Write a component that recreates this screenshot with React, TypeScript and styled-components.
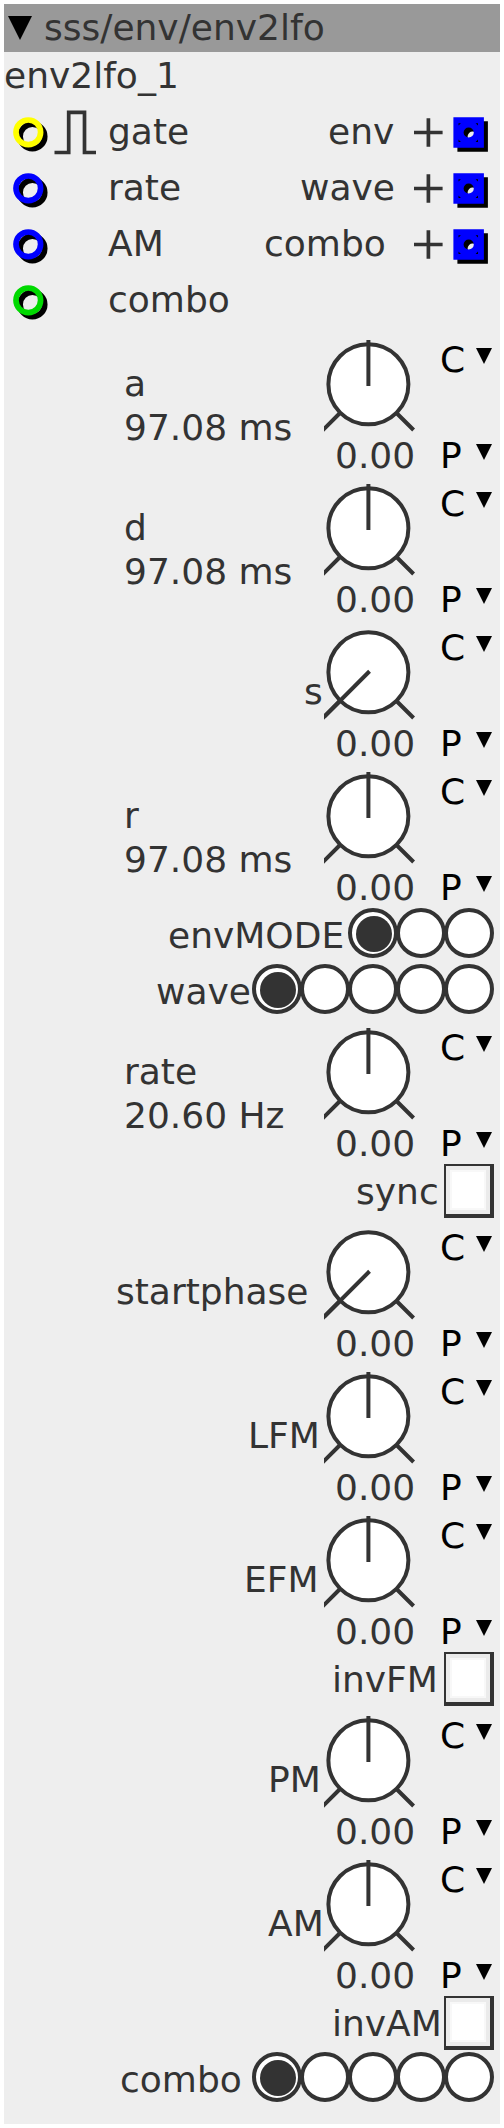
import React, { useId, useState } from "react";
import styled, { createGlobalStyle } from "styled-components";

const INK = "#333333";
const PANEL = "#eeeeee";

const GlobalStyle = createGlobalStyle`
  *, *::before, *::after { box-sizing: border-box; }
  body {
    margin: 0;
    background: #ffffff;
    color: ${INK};
    font: 36px/48px "DejaVu Sans", sans-serif;
  }
  button, input { font: inherit; color: inherit; margin: 0; }
`;

const Patch = styled.main`
  padding: 4px;
`;

const Panel = styled.section`
  background: ${PANEL};
  padding-bottom: 20px;
`;

const TitleBar = styled.header`
  display: flex;
  align-items: center;
  height: 48px;
  padding-left: 4px;
  background: #999999;
`;

const CollapseButton = styled.button`
  display: flex;
  width: 36px;
  padding: 0;
  border: 0;
  background: none;
  color: #000000;
`;

const Title = styled.h1`
  margin: 0;
  font: inherit;
`;

const InstanceName = styled.div`
  padding-bottom: 4px;
`;

const PortRow = styled.div`
  display: flex;
  height: 56px;
  line-height: 56px;
`;

const SignalSlot = styled.span`
  width: 56px;
`;

const Drawing = styled.svg`
  display: block;
  flex: none;
`;

/* Labels are sized in steps of the 4px grid. */
const Label = styled.span<{ $cells: number }>`
  flex: none;
  width: ${(p) => p.$cells * 4}px;
  white-space: nowrap;
`;

const OutletGroup = styled.div`
  display: flex;
  margin-left: auto;
`;

const KnobRow = styled.div`
  display: flex;
  height: 144px;
`;

const KnobCaption = styled.div`
  display: flex;
  flex: 1;
  align-items: center;
  justify-content: flex-end;
  padding-top: 8px;
  line-height: 44px;
`;

const Reading = styled.div`
  width: 200px;
  padding-top: 4px;
  white-space: nowrap;
`;

const KnobColumn = styled.div`
  flex: none;
  width: 116px;
  padding-top: 12px;
`;

const Dial = styled.div`
  position: relative;
  height: 100px;
`;

const DialInput = styled.input`
  position: absolute;
  inset: 0;
  width: 92px;
  height: 92px;
  opacity: 0;
  cursor: pointer;
`;

const DialValue = styled.output`
  display: block;
  padding-left: 11px;
  line-height: 32px;
`;

const MenuColumn = styled.div`
  display: flex;
  flex: none;
  flex-direction: column;
  justify-content: space-between;
  width: 60px;
  padding-top: 16px;
`;

const MenuButton = styled.button`
  display: flex;
  align-items: flex-start;
  justify-content: space-between;
  width: 52px;
  height: 32px;
  padding: 0;
  border: 0;
  background: none;
  color: #000000;
  line-height: 32px;
`;

const ControlRow = styled.div`
  display: flex;
  align-items: flex-start;
  justify-content: flex-end;
  height: 56px;
  padding: 4px 6px 0 0;
`;

const ControlLabel = styled.label<{ $cells: number }>`
  flex: none;
  width: ${(p) => p.$cells * 4}px;
  padding-top: 4px;
  white-space: nowrap;
`;

const RadioStrip = styled.div`
  display: flex;
  padding-right: 2px;
`;

const Radio = styled.input`
  appearance: none;
  flex: none;
  width: 50px;
  height: 50px;
  margin-right: -2px;
  border: 4px solid ${INK};
  border-radius: 50%;
  background: #ffffff;

  &:checked::before {
    content: "";
    display: block;
    width: 36px;
    height: 36px;
    margin: 4px 0 0 4px;
    border-radius: 50%;
    background: ${INK};
  }
`;

const CheckBox = styled.input`
  appearance: none;
  flex: none;
  width: 50px;
  height: 54px;
  border: solid ${INK};
  border-width: 2px 4px 4px 2px;
  background: #ffffff;
  box-shadow: inset 0 0 0 4px #ebebeb, inset 0 0 0 6px #f8f8f8;

  &:checked {
    background: ${INK};
  }
`;

function Inlet({ color }: { color: string }) {
  return (
    <Drawing width="48" height="56" viewBox="0 0 48 56" fill="none" strokeWidth="5.7" aria-hidden="true">
      <circle cx="28.4" cy="32.4" r="12.3" stroke="#000000" />
      <circle cx="24.3" cy="28.3" r="12.3" stroke={color} />
    </Drawing>
  );
}

function GateIcon() {
  return (
    <Drawing width="48" height="56" viewBox="0 0 48 56" fill="none" stroke={INK} strokeWidth="3.7" aria-hidden="true">
      <path d="M2.5 48.5H16.7V8.3H32.5V48.5H44" />
    </Drawing>
  );
}

const OUTLET_SHAPE = "M0 0H30.5V30.5H0ZM15.3 10.2A5.1 5.1 0 1 0 15.3 20.4A5.1 5.1 0 1 0 15.3 10.2Z";

function Outlet() {
  return (
    <Drawing width="104" height="56" viewBox="0 0 104 56" aria-hidden="true">
      <path d="M18 28.5H46.6M32.4 14.3V42.7" stroke={INK} strokeWidth="3.7" />
      <g fillRule="evenodd">
        <path d={OUTLET_SHAPE} transform="translate(61.4 17.2)" />
        <path d={OUTLET_SHAPE} transform="translate(57.4 13.2)" fill="#0000ff" />
      </g>
      <path d="M62.5 19.2h2.4l-2.4 2.4zM82 19.2h-2.4l2.4 2.4zM62.5 38h2.4l-2.4 -2.4zM82 38h-2.4l2.4 -2.4z" />
    </Drawing>
  );
}

function MenuArrow() {
  return (
    <Drawing width="16" height="20" viewBox="0 0 16 20" aria-hidden="true">
      <path d="M0 4H16L8 20Z" />
    </Drawing>
  );
}

interface KnobProps {
  name: string;
  cells?: number;
  reading?: string;
  low?: boolean;
}

function Knob({ name, cells = 0, reading, low = false }: KnobProps) {
  const [value, setValue] = useState(0);
  const id = useId();
  const min = low ? 0 : -64;
  const angle = ((value - min) / (64 - min)) * 270 - 135;
  return (
    <KnobRow>
      <KnobCaption>
        {reading ? (
          <Reading>
            <label htmlFor={id}>{name}</label>
            <div>{reading}</div>
          </Reading>
        ) : (
          <Label as="label" htmlFor={id} $cells={cells}>
            {name}
          </Label>
        )}
      </KnobCaption>
      <KnobColumn>
        <Dial>
          <Drawing width="96" height="92" viewBox="0 0 96 92" fill="none" stroke={INK} strokeWidth="4" aria-hidden="true">
            <path d="M16 73L-2 91M72.5 73L89.6 90" />
            <circle cx="44.4" cy="44.3" r="40" fill="#ffffff" />
            <path d={low ? "M44.4 46V-18" : "M44.4 46V0"} transform={`rotate(${angle} 44.4 44.4)`} />
          </Drawing>
          <DialInput
            id={id}
            type="range"
            min={min}
            max={64}
            step={0.5}
            value={value}
            onChange={(e) => setValue(Number(e.target.value))}
          />
        </Dial>
        <DialValue htmlFor={id}>{value.toFixed(2)}</DialValue>
      </KnobColumn>
      <MenuColumn>
        <MenuButton type="button" aria-haspopup="menu">
          C<MenuArrow />
        </MenuButton>
        <MenuButton type="button" aria-haspopup="menu">
          P<MenuArrow />
        </MenuButton>
      </MenuColumn>
    </KnobRow>
  );
}

function Selector({ name, cells, count }: { name: string; cells: number; count: number }) {
  const [selected, setSelected] = useState(0);
  const id = useId();
  return (
    <ControlRow>
      <ControlLabel htmlFor={`${id}-0`} id={id} $cells={cells}>
        {name}
      </ControlLabel>
      <RadioStrip role="radiogroup" aria-labelledby={id}>
        {Array.from({ length: count }, (_, i) => (
          <Radio
            key={i}
            id={`${id}-${i}`}
            type="radio"
            name={id}
            aria-label={`${name} ${i + 1}`}
            checked={selected === i}
            onChange={() => setSelected(i)}
          />
        ))}
      </RadioStrip>
    </ControlRow>
  );
}

function Toggle({ name, cells }: { name: string; cells: number }) {
  const id = useId();
  return (
    <ControlRow>
      <ControlLabel htmlFor={id} $cells={cells}>
        {name}
      </ControlLabel>
      <CheckBox id={id} type="checkbox" />
    </ControlRow>
  );
}

const PORTS = [
  { inlet: "gate", color: "#ffff00", gate: true, outlet: "env", cells: 17 },
  { inlet: "rate", color: "#0000ff", outlet: "wave", cells: 24 },
  { inlet: "AM", color: "#0000ff", outlet: "combo", cells: 33 },
  { inlet: "combo", color: "#00d900" },
];

export default function App() {
  return (
    <>
      <GlobalStyle />
      <Patch>
        <Panel>
          <TitleBar>
            <CollapseButton type="button" aria-label="Collapse">
              <Drawing width="24" height="24" viewBox="0 0 24 24" aria-hidden="true">
                <path d="M0 0H24L12 24Z" />
              </Drawing>
            </CollapseButton>
            <Title>sss/env/env2lfo</Title>
          </TitleBar>
          <InstanceName>env2lfo_1</InstanceName>
          {PORTS.map((port) => (
            <PortRow key={port.inlet}>
              <Inlet color={port.color} />
              <SignalSlot>{port.gate && <GateIcon />}</SignalSlot>
              <span>{port.inlet}</span>
              {port.outlet && (
                <OutletGroup>
                  <Label $cells={port.cells}>{port.outlet}</Label>
                  <Outlet />
                </OutletGroup>
              )}
            </PortRow>
          ))}
          <Knob name="a" reading="97.08 ms" />
          <Knob name="d" reading="97.08 ms" />
          <Knob name="s" cells={5} low />
          <Knob name="r" reading="97.08 ms" />
          <Selector name="envMODE" cells={45} count={3} />
          <Selector name="wave" cells={24} count={5} />
          <Knob name="rate" reading="20.60 Hz" />
          <Toggle name="sync" cells={22} />
          <Knob name="startphase" cells={52} low />
          <Knob name="LFM" cells={19} />
          <Knob name="EFM" cells={20} />
          <Toggle name="invFM" cells={28} />
          <Knob name="PM" cells={14} />
          <Knob name="AM" cells={14} />
          <Toggle name="invAM" cells={28} />
          <Selector name="combo" cells={33} count={5} />
        </Panel>
      </Patch>
    </>
  );
}
